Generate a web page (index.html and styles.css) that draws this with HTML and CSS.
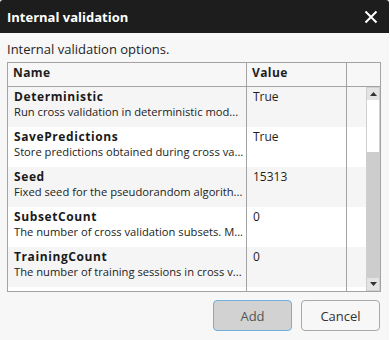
FILE: index.html
```html
<!DOCTYPE html>
<html>
<head>
<meta charset="utf-8">
<link rel="stylesheet" href="styles.css">
</head>
<body>
<div class="dialog">
  <div class="titlebar">
    <span class="title">Internal validation</span>
    <svg class="close" width="14" height="14" viewBox="0 0 14 14"><path d="M1.5 1.5 L12.5 12.5 M12.5 1.5 L1.5 12.5" stroke="#fff" stroke-width="2" fill="none"/></svg>
  </div>
  <div class="subtitle">Internal validation options.</div>
  <div class="grid">
    <div class="ghead">
      <div class="hname">Name</div>
      <div class="hvalue">Value</div>
      <div class="hpad"></div>
    </div>
    <div class="gbody">
      <div class="rows">
        <div class="row alt">
          <div class="cname"><div class="pname">Deterministic</div><div class="pdesc">Run cross validation in deterministic mod...</div></div>
          <div class="cvalue">True</div>
          <div class="cpad"></div>
        </div>
        <div class="row">
          <div class="cname"><div class="pname">SavePredictions</div><div class="pdesc">Store predictions obtained during cross va...</div></div>
          <div class="cvalue">True</div>
          <div class="cpad"></div>
        </div>
        <div class="row alt">
          <div class="cname"><div class="pname">Seed</div><div class="pdesc">Fixed seed for the pseudorandom algorith...</div></div>
          <div class="cvalue">15313</div>
          <div class="cpad"></div>
        </div>
        <div class="row">
          <div class="cname"><div class="pname">SubsetCount</div><div class="pdesc">The number of cross validation subsets. M...</div></div>
          <div class="cvalue">0</div>
          <div class="cpad"></div>
        </div>
        <div class="row alt">
          <div class="cname"><div class="pname">TrainingCount</div><div class="pdesc">The number of training sessions in cross v...</div></div>
          <div class="cvalue">0</div>
          <div class="cpad"></div>
        </div>
        <div class="filler">
          <div class="fname"></div><div class="fvalue"></div>
        </div>
      </div>
      <div class="scrollbar">
        <div class="sbtn"><svg width="7" height="4" viewBox="0 0 7 4"><path d="M0 4 L3.5 0 L7 4 Z" fill="#333"/></svg></div>
        <div class="track"><div class="thumb"></div></div>
        <div class="sbtn"><svg width="7" height="4" viewBox="0 0 7 4"><path d="M0 0 L3.5 4 L7 0 Z" fill="#333"/></svg></div>
      </div>
    </div>
  </div>
  <div class="buttons">
    <button class="btn add">Add</button>
    <button class="btn cancel">Cancel</button>
  </div>
</div>
</body>
</html>
```

FILE: styles.css
```css
html, body {
  margin: 0;
  padding: 0;
  background: #ffffff;
}
body {
  font-family: "Open Sans", "Noto Sans", sans-serif;
  color: #1e1e1e;
}
.dialog {
  width: 389px;
  height: 340px;
  background: #f7f7f7;
  display: flex;
  flex-direction: column;
  overflow: hidden;
}
.titlebar {
  height: 33px;
  flex: none;
  background: #1d1d1d;
  display: flex;
  align-items: center;
  justify-content: space-between;
  padding: 0 11px 0 7px;
  border-radius: 3px 3px 0 0;
}
.title {
  color: #ffffff;
  font-weight: 700;
  font-size: 13px;
  line-height: 18px;
  padding-top: 1px;
}
.close {
  display: block;
}
.subtitle {
  margin: 7px 7px 0;
  font-size: 13px;
  line-height: 18px;
  color: #1e1e1e;
}
.grid {
  margin: 4px 0 0 7px;
  width: 372px;
  height: 228px;
  border: 1px solid #a3a3a3;
  display: flex;
  flex-direction: column;
  background: #f7f7f7;
}
.ghead {
  height: 23px;
  flex: none;
  display: flex;
  border-bottom: 1px solid #a3a3a3;
  font-size: 12px;
  font-weight: 700;
  line-height: 18px;
  letter-spacing: 0.4px;
}
.hname {
  width: 239px;
  padding: 1px 0 0 5px;
  box-sizing: border-box;
  border-right: 1px solid #a3a3a3;
}
.hvalue {
  width: 100px;
  padding: 1px 0 0 5px;
  box-sizing: border-box;
  border-right: 1px solid #a3a3a3;
}
.hpad {
  flex: 1;
}
.gbody {
  flex: 1;
  display: flex;
  min-height: 0;
}
.rows {
  width: 358px;
  display: flex;
  flex-direction: column;
  background: #ffffff;
}
.row {
  height: 40px;
  flex: none;
  display: flex;
  background: #ffffff;
}
.row.alt {
  background: #f5f5f5;
}
.cname {
  width: 239px;
  box-sizing: border-box;
  border-right: 1px solid #a3a3a3;
  padding: 1px 1px 0 6px;
  min-width: 0;
}
.pname {
  font-size: 12px;
  line-height: 17px;
  font-weight: 700;
  letter-spacing: 0.6px;
  color: #1a1a1a;
}
.pdesc {
  font-size: 11.2px;
  line-height: 14px;
  white-space: nowrap;
  overflow: hidden;
  color: #222222;
}
.cvalue {
  width: 100px;
  box-sizing: border-box;
  border-right: 1px solid #a3a3a3;
  padding: 1px 0 0 6px;
  font-size: 12px;
  line-height: 17px;
  color: #1e1e1e;
}
.cpad {
  flex: 1;
}
.filler {
  flex: 1;
  display: flex;
}
.fname {
  width: 239px;
  box-sizing: border-box;
  border-right: 1px solid #a3a3a3;
}
.fvalue {
  width: 100px;
  box-sizing: border-box;
  border-right: 1px solid #a3a3a3;
}
.scrollbar {
  width: 14px;
  box-sizing: border-box;
  border: 1px solid #cfcfcf;
  background: #ffffff;
  display: flex;
  flex-direction: column;
}
.sbtn {
  height: 12px;
  flex: none;
  background: #e3e3e3;
  display: flex;
  align-items: center;
  justify-content: center;
}
.track {
  flex: 1;
  display: flex;
  flex-direction: column;
  justify-content: flex-end;
}
.thumb {
  height: 126px;
  background: #cdcdcd;
}
.buttons {
  display: flex;
  justify-content: flex-end;
  gap: 9px;
  padding: 8px 9px 0 0;
}
.btn {
  width: 79px;
  height: 31px;
  font-family: "Open Sans", "Noto Sans", sans-serif;
  font-size: 13px;
  border-radius: 4px;
  padding: 0;
}
.add {
  background: #d2d2d2;
  border: 1px solid #6fb0e0;
  color: #555555;
}
.cancel {
  background: #f7f7f7;
  border: 1px solid #a8a8a8;
  color: #333333;
}
```
